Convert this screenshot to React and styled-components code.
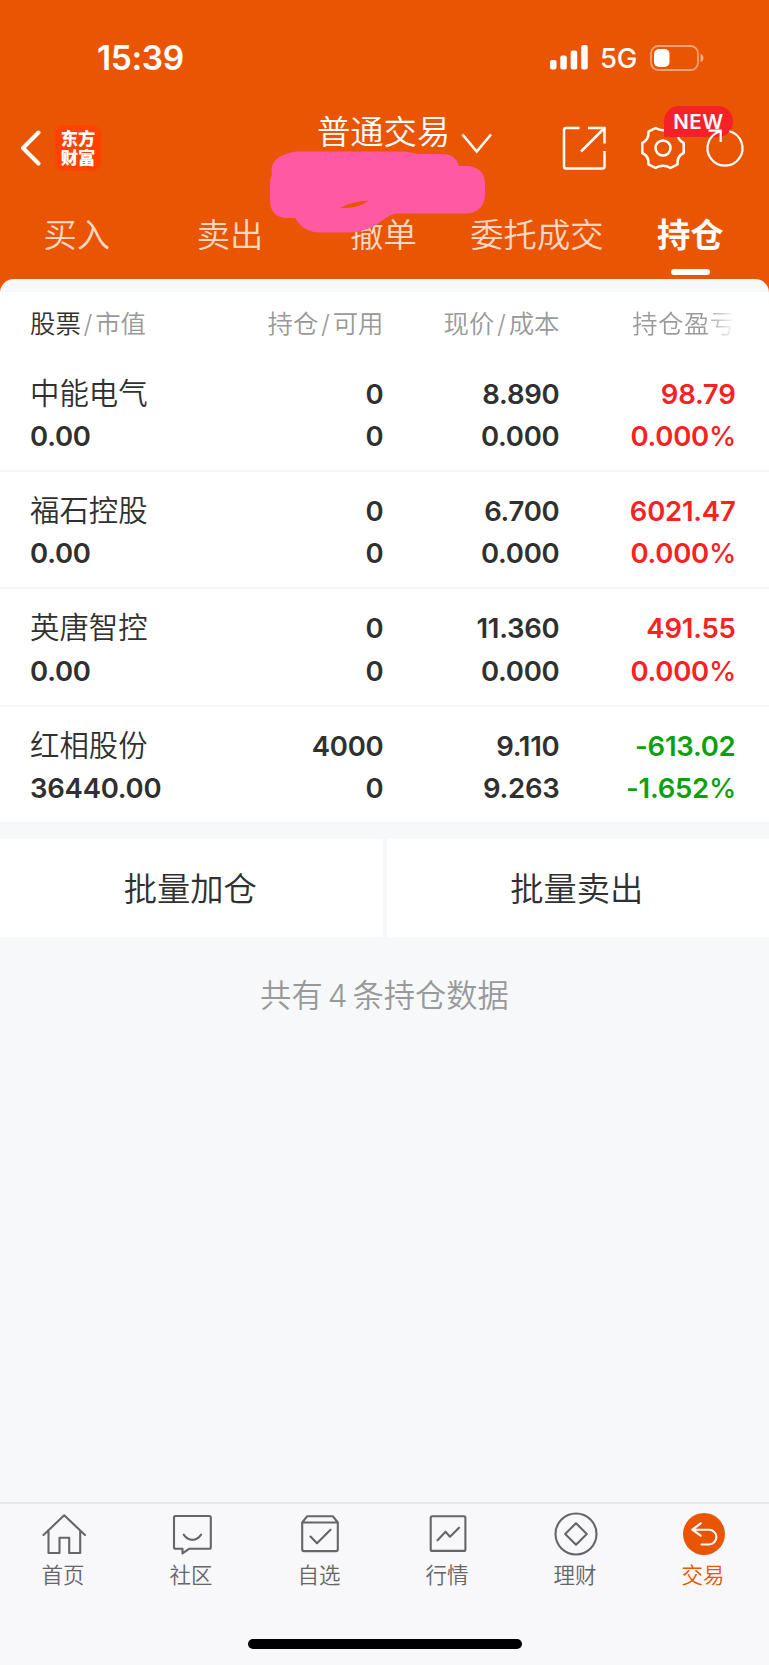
import styled, { createGlobalStyle } from "styled-components";

const holdings = [
  { name: "中能电气", value: "0.00", amount: "0", usable: "0", price: "8.890", cost: "0.000", profit: "98.79", rate: "0.000" },
  { name: "福石控股", value: "0.00", amount: "0", usable: "0", price: "6.700", cost: "0.000", profit: "6021.47", rate: "0.000" },
  { name: "英唐智控", value: "0.00", amount: "0", usable: "0", price: "11.360", cost: "0.000", profit: "491.55", rate: "0.000" },
  { name: "红相股份", value: "36440.00", amount: "4000", usable: "0", price: "9.110", cost: "9.263", profit: "-613.02", rate: "-1.652" },
];

const tabs = ["买入", "卖出", "撤单", "委托成交", "持仓"];

const HomeIcon = () => (
  <Icon viewBox="0 0 48 48">
    <path d="M3.500 25 24.200 5.300 45 25M8.500 21v22h11V27.800h9.700V43h11V21" />
  </Icon>
);
const ChatIcon = () => (
  <Icon viewBox="0 0 48 48">
    <path d="M7.500 6h33.800a1.500 1.500 0 0 1 1.500 1.500v29.800a1.500 1.500 0 0 1-1.500 1.500H21l-6.500 4.500v-4.500h-7A1.500 1.500 0 0 1 6 37.300V7.500A1.500 1.500 0 0 1 7.500 6z" />
    <path d="M15.700 24.700q3.500 5.200 8.700 5.200t8.700-5.200" />
  </Icon>
);
const BoxIcon = () => (
  <Icon viewBox="0 0 48 48">
    <path d="M6.200 12.500 11 6.300h26l4.800 6.200v26.800a1.800 1.800 0 0 1-1.800 1.800H8a1.800 1.800 0 0 1-1.800-1.800zM6.200 12.500h35.600M14.500 26.500l6.500 6.700 13.500-13.500" />
  </Icon>
);
const ChartIcon = () => (
  <Icon viewBox="0 0 48 48">
    <rect x="6.700" y="6.200" width="34.700" height="34.700" rx="1.500" />
    <path d="M13.500 30.200l8-8.500 4.500 5 9-9" />
  </Icon>
);
const WealthIcon = () => (
  <Icon viewBox="0 0 48 48">
    <circle cx="24" cy="24" r="20.500" />
    <path d="M24 13.200 34.800 24 24 34.800 13.200 24z" />
  </Icon>
);
const TradeIcon = () => (
  <Icon viewBox="0 0 48 48">
    <circle cx="24" cy="24" r="21" fill="#ea5504" stroke="none" />
    <path d="M20.700 13.300 12.300 19.700l8.400 6M12.300 19.700H29a7.400 7.400 0 0 1 0 14.800h-7.500" stroke="#fff" />
  </Icon>
);

const menus = [
  { label: "首页", icon: HomeIcon },
  { label: "社区", icon: ChatIcon },
  { label: "自选", icon: BoxIcon },
  { label: "行情", icon: ChartIcon },
  { label: "理财", icon: WealthIcon },
  { label: "交易", icon: TradeIcon, active: true },
];

const App = () => {
  return (
    <Page>
      <GlobalStyle />
      <Header>
        <StatusBar>
          <Time>15:39</Time>
          <Signal viewBox="0 0 38 25">
            <rect x="0" y="15" width="6.500" height="9.500" rx="2" />
            <rect x="10.300" y="10.500" width="6.500" height="14" rx="2" />
            <rect x="20.700" y="5.500" width="6.500" height="19" rx="2" />
            <rect x="31.200" y="0" width="6.500" height="24.500" rx="2" />
          </Signal>
          <Network>5G</Network>
          <Battery viewBox="0 0 54 26">
            <rect x="1" y="1" width="47" height="24" rx="7.500" fill="none" stroke="#fff" strokeOpacity="0.45" strokeWidth="1.800" />
            <rect x="4" y="4" width="15.500" height="18" rx="5" fill="#fff" />
            <path d="M50.500 8.800q3 1.200 3 4.200t-3 4.200z" fill="#fff" fillOpacity="0.500" />
          </Battery>
        </StatusBar>
        <NavBar>
          <Back viewBox="0 0 21 36">
            <path d="M18.500 2.500 3 18l15.500 15.500" />
          </Back>
          <Logo>
            <span>东方</span>
            <span>财富</span>
          </Logo>
          <Title>普通交易</Title>
          <Down viewBox="0 0 32 22">
            <path d="M1.500 1.500 15.700 18.500 30 1.500" />
          </Down>
          <Share viewBox="0 0 44 44">
            <path d="M17.500 2H4a2 2 0 0 0-2 2v36.500a2 2 0 0 0 2 2h36.500a2 2 0 0 0 2-2V25M26 2h16.500v15.500M42 2.500 19 25.500" />
          </Share>
          <Setting>
            <Gear viewBox="0 0 44 44">
              <path d="M14.500 2Q22 6.500 29.500 2L36.500 5.700Q36 14 42.700 17V27Q36 30 36.500 38.300L29.500 42Q22 37.500 14.500 42L7.500 38.300Q8 30 1.300 27V17Q8 14 7.500 5.700z" />
              <circle cx="22" cy="22" r="7.500" />
            </Gear>
            <Badge>NEW</Badge>
          </Setting>
          <Refresh viewBox="0 0 42 42">
            <path d="M25.300 4.200A17.500 17.500 0 1 1 16.700 4.200M4.500 3.600H16.700V15" />
          </Refresh>
        </NavBar>
        <Tabs>
          {tabs.map((tab) => (
            <Tab key={tab} $active={tab === "持仓"}>
              {tab}
            </Tab>
          ))}
        </Tabs>
        <Scribble viewBox="0 0 240 100">
          <path
            fillRule="evenodd"
            d="M36 11.500H140Q150 11.500 157 14H184Q196 14.500 199 26H208Q225 28 225 44V55Q224 72 207 73.500H136Q129 75 123 80Q107 92.500 90 92.500H60Q43 92 35 78H25Q10 76 10 60V42Q10 38 12 35Q8 16 36 11.500zM80 68Q92 61 109 60.500Q99 67.500 88 68z"
          />
        </Scribble>
      </Header>
      <Sheet>
        <HeadRow>
          <Head>
            <b>股票</b>
            <i>/</i>市值
          </Head>
          <Head>
            持仓<i>/</i>可用
          </Head>
          <Head>
            现价<i>/</i>成本
          </Head>
          <Head $fade>持仓盈亏</Head>
        </HeadRow>
        {holdings.map((item) => (
          <Row key={item.name}>
            <Name>{item.name}</Name>
            <Num>{item.amount}</Num>
            <Num>{item.price}</Num>
            <Num $color={item.profit.startsWith("-") ? "#0aa10a" : "#f82222"}>{item.profit}</Num>
            <Num>{item.value}</Num>
            <Num>{item.usable}</Num>
            <Num>{item.cost}</Num>
            <Num $color={item.rate.startsWith("-") ? "#0aa10a" : "#f82222"}>
              {item.rate}
              <Percent>%</Percent>
            </Num>
          </Row>
        ))}
      </Sheet>
      <Actions>
        <Action>批量加仓</Action>
        <Action>批量卖出</Action>
      </Actions>
      <Total>
        共有<span>4</span>条持仓数据
      </Total>
      <BottomBar>
        <Menus>
          {menus.map(({ label, icon: MenuIcon, active }) => (
            <Menu key={label} $active={active}>
              <MenuIcon />
              <span>{label}</span>
            </Menu>
          ))}
        </Menus>
        <HomeLine />
      </BottomBar>
    </Page>
  );
};

export default App;

const GlobalStyle = createGlobalStyle`
  * {
    box-sizing: border-box;
  }
  body {
    margin: 0;
    background: #f6f8fa;
    font-family: Inter, "Noto Sans CJK SC", sans-serif;
    font-weight: 350;
    color: #303030;
  }
  svg {
    display: block;
    flex-shrink: 0;
  }
`;
const Page = styled.div`
  width: 769px;
  height: 1665px;
  display: flex;
  flex-direction: column;
  overflow: hidden;
`;
const Header = styled.div`
  position: relative;
  height: 299px;
  flex-shrink: 0;
  background: #ea5504;
  color: #fff;
`;
const StatusBar = styled.div`
  height: 98px;
  padding: 17px 65px 0 97px;
  display: flex;
  align-items: center;
`;
const Time = styled.div`
  width: 454px;
  font-size: 33.5px;
  font-weight: 600;
  letter-spacing: -0.4px;
`;
const Signal = styled.svg`
  width: 38px;
  height: 25px;
  fill: #fff;
`;
const Network = styled.div`
  width: 50px;
  margin-left: 12px;
  font-size: 27.5px;
  font-weight: 450;
  letter-spacing: -0.4px;
`;
const Battery = styled.svg`
  width: 54px;
  height: 26px;
`;
const NavBar = styled.div`
  height: 100px;
  display: flex;
  align-items: center;
  padding-left: 20px;
`;
const Back = styled.svg`
  width: 21px;
  height: 36px;
  fill: none;
  stroke: #fff;
  stroke-width: 4;
  stroke-linecap: round;
  stroke-linejoin: round;
`;
const Logo = styled.div`
  display: flex;
  flex-direction: column;
  justify-content: center;
  width: 46px;
  height: 46px;
  margin: 0 0 1px 14px;
  padding-bottom: 2px;
  border-radius: 9px;
  background: #ff4200;
  text-align: center;
  font-family: "Noto Sans CJK SC", sans-serif;
  font-size: 17.3px;
  font-weight: 900;
  line-height: 19px;
`;
const Title = styled.div`
  width: 134px;
  margin: 0 10px 33px 216px;
  font-size: 33.3px;
  line-height: 40px;
  white-space: nowrap;
`;
const Down = styled.svg`
  width: 32px;
  height: 22px;
  margin-bottom: 8px;
  fill: none;
  stroke: #fff;
  stroke-width: 2.6;
`;
const Share = styled.svg`
  width: 44px;
  height: 44px;
  margin-left: 69px;
  fill: none;
  stroke: #fff;
  stroke-width: 2.5;
`;
const Setting = styled.div`
  position: relative;
  margin-left: 35px;
`;
const Gear = styled.svg`
  width: 44px;
  height: 44px;
  fill: none;
  stroke: #fff;
  stroke-width: 2.5;
  stroke-linejoin: round;
`;
const Badge = styled.div`
  position: absolute;
  top: -20px;
  left: 23px;
  width: 69px;
  height: 31px;
  border-radius: 15px 15px 15px 0;
  background: #f52128;
  text-align: center;
  font-size: 20.5px;
  font-weight: 600;
  line-height: 31px;
  letter-spacing: 0.5px;
`;
const Refresh = styled.svg`
  position: relative;
  width: 42px;
  height: 42px;
  margin-left: 19px;
  fill: none;
  stroke: #fff;
  stroke-width: 2.2;
`;
const Tabs = styled.div`
  display: flex;
  height: 81px;
  margin-right: 2px;
`;
const Tab = styled.div`
  flex: 1;
  display: flex;
  flex-direction: column;
  align-items: center;
  justify-content: space-between;
  padding: 17px 0 4px;
  font-size: 33.3px;
  line-height: 40px;
  white-space: nowrap;
  font-weight: ${({ $active }) => ($active ? 600 : 350)};
  color: ${({ $active }) => ($active ? "#fff" : "#fcd9c4")};
  &::after {
    content: "";
    width: 39px;
    height: 6px;
    border-radius: 3px;
    background: ${({ $active }) => ($active ? "#fff" : "transparent")};
  }
`;
/* covers the account number */
const Scribble = styled.svg`
  position: absolute;
  left: 260px;
  top: 140px;
  width: 240px;
  height: 100px;
  fill: #ff59a3;
  filter: blur(0.6px);
`;
const Sheet = styled.div`
  position: relative;
  margin-top: -20px;
  padding-top: 13px;
  border-radius: 14px 14px 0 0;
  background: linear-gradient(#f6f8fa 13px, #fff 13px);
`;
const HeadRow = styled.div`
  display: grid;
  grid-template-columns: 210px 143.500px 176px 176px;
  height: 63px;
  padding-left: 30px;
  align-items: center;
`;
const Head = styled.div`
  font-size: 25.4px;
  line-height: 32px;
  color: #999;
  text-align: right;
  white-space: nowrap;
  b {
    font-weight: 350;
    color: #303030;
  }
  i {
    font-style: normal;
    margin: 0 2.8px;
  }
  &:first-child {
    text-align: left;
  }
  ${({ $fade }) =>
    $fade &&
    `
    letter-spacing: 0.4px;
    background: linear-gradient(90deg, #999 82%, #fff 100%);
    -webkit-background-clip: text;
    -webkit-text-fill-color: transparent;
  `}
`;
const Row = styled.div`
  display: grid;
  grid-template-columns: 210px 143.500px 176px 176px;
  grid-auto-rows: 42.3px;
  height: 117.2px;
  padding: 18px 0 0 30px;
  line-height: 42px;
  border-bottom: 2px solid #f4f5f6;
`;
const Name = styled.div`
  font-size: 29.4px;
`;
const Num = styled.div`
  font-size: 27.5px;
  font-weight: 580;
  letter-spacing: -0.25px;
  text-align: right;
  color: ${({ $color }) => $color || "#303030"};
  &:nth-child(5) {
    text-align: left;
  }
`;
const Percent = styled.span`
  font-weight: 450;
  letter-spacing: -0.8px;
`;
const Actions = styled.div`
  display: flex;
  gap: 4px;
  margin-top: 15px;
`;
const Action = styled.div`
  flex: 1;
  height: 98px;
  padding-right: 2px;
  background: #fff;
  text-align: center;
  font-size: 33.3px;
  line-height: 100px;
`;
const Total = styled.div`
  flex: 1;
  padding-top: 39px;
  text-align: center;
  font-size: 31.3px;
  line-height: 40px;
  color: #999;
  span {
    margin: 0 5px;
  }
`;
const BottomBar = styled.div`
  height: 163px;
  border-top: 2px solid #e6e9eb;
  background: #f8f8fb;
`;
const Menus = styled.div`
  display: flex;
  height: 135px;
  margin-right: 1px;
  padding-top: 6px;
`;
const Menu = styled.div`
  flex: 1;
  display: flex;
  flex-direction: column;
  align-items: center;
  font-size: 21.5px;
  line-height: 34px;
  color: ${({ $active }) => ($active ? "#ea5504" : "#666")};
  span {
    padding-right: 2px;
  }
`;
const Icon = styled.svg`
  width: 48px;
  height: 48px;
  fill: none;
  stroke: #666;
  stroke-width: 2.1;
  stroke-linecap: round;
  stroke-linejoin: round;
`;
const HomeLine = styled.div`
  width: 274px;
  height: 10px;
  margin: 0 auto;
  border-radius: 5px;
  background: #000;
`;
